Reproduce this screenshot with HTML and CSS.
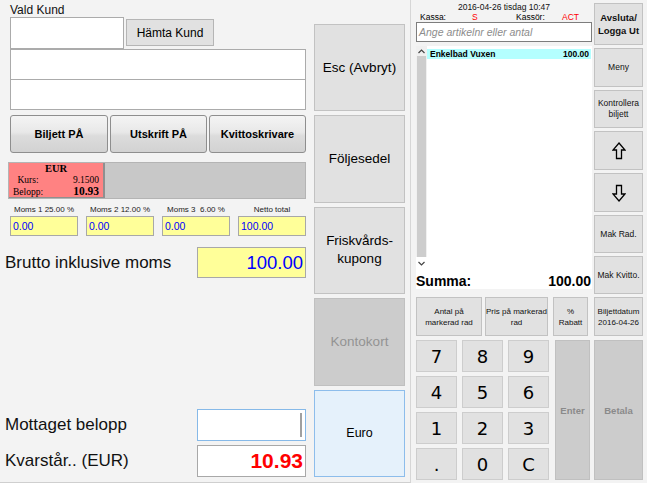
FILE: index.html
```html
<!DOCTYPE html>
<html lang="sv">

<head>
    <meta charset="UTF-8">
    <title>Kassa</title>
    <link rel="stylesheet" href="styles.css">
</head>

<body>
    <div class="screen">
        <!-- vänster del: kund, moms och betalning -->
        <div class="sale">
            <div class="customer">
                <div class="caption">Vald Kund</div>
                <div class="cust-row">
                    <div class="field cust-id"></div>
                    <button class="btn fetch">Hämta Kund</button>
                </div>
                <div class="field cust-line"></div>
                <div class="field cust-line second"></div>

                <div class="toggles">
                    <button class="toggle">Biljett PÅ</button>
                    <button class="toggle">Utskrift PÅ</button>
                    <button class="toggle">Kvittoskrivare</button>
                </div>

                <div class="currency">
                    <div class="cur-box">
                        <div class="cur-name">EUR</div>
                        <div class="cur-line"><span class="cur-label">Kurs:</span><span>9.1500</span></div>
                        <div class="cur-line last"><span class="cur-label">Belopp:</span><b class="cur-sum">10.93</b></div>
                    </div>
                </div>

                <div class="vat">
                    <div class="vat-cell">
                        <div class="vat-label">Moms 1 25.00 %</div>
                        <div class="vat-value">0.00</div>
                    </div>
                    <div class="vat-cell">
                        <div class="vat-label">Moms 2 12.00 %</div>
                        <div class="vat-value">0.00</div>
                    </div>
                    <div class="vat-cell">
                        <div class="vat-label">Moms 3  6.00 %</div>
                        <div class="vat-value">0.00</div>
                    </div>
                    <div class="vat-cell">
                        <div class="vat-label">Netto total</div>
                        <div class="vat-value">100.00</div>
                    </div>
                </div>

                <div class="total-row brutto">
                    <span class="total-label">Brutto inklusive moms</span>
                    <div class="amount gross">100.00</div>
                </div>

                <div class="spacer"></div>

                <div class="total-row">
                    <span class="total-label">Mottaget belopp</span>
                    <div class="amount received"><i class="caret"></i></div>
                </div>
                <div class="total-row due-row">
                    <span class="total-label">Kvarstår.. (EUR)</span>
                    <div class="amount due">10.93</div>
                </div>
            </div>

            <div class="payments">
                <button class="btn pay">Esc (Avbryt)</button>
                <button class="btn pay">Följesedel</button>
                <button class="btn pay">Friskvårds-<br>kupong</button>
                <button class="btn pay off">Kontokort</button>
                <button class="btn pay euro">Euro</button>
            </div>
        </div>

        <!-- höger del: kassarader och knappsats -->
        <div class="register">
            <div class="register-main">
                <div class="head">
                    <div class="date">2016-04-26 tisdag 10:47</div>
                    <div class="till">
                        <span class="till-key">Kassa:</span>
                        <span class="till-val">S</span>
                        <span class="till-key">Kassör:</span>
                        <span class="till-val">ACT</span>
                    </div>
                </div>
                <div class="article">Ange artikelnr eller antal</div>

                <div class="list">
                    <div class="list-body">
                        <div class="scroll">
                            <div class="scroll-arrow">
                                <svg width="7" height="5" viewBox="0 0 7 5"><path d="M0.5 4 L3.5 1 L6.5 4" fill="none" stroke="#444" stroke-width="1.2"/></svg>
                            </div>
                            <div class="scroll-thumb"></div>
                            <div class="scroll-arrow down">
                                <svg width="7" height="5" viewBox="0 0 7 5"><path d="M0.5 1 L3.5 4 L6.5 1" fill="none" stroke="#444" stroke-width="1.2"/></svg>
                            </div>
                        </div>
                        <div class="rows">
                            <div class="row sel"><span>Enkelbad Vuxen</span><span>100.00</span></div>
                        </div>
                    </div>
                    <div class="sum"><span>Summa:</span><span>100.00</span></div>
                </div>

                <div class="row-tools">
                    <button class="btn small tool qty">Antal på<br>markerad rad</button>
                    <button class="btn small tool price">Pris på markerad<br>rad</button>
                    <button class="btn small tool rebate">%<br>Rabatt</button>
                </div>

                <div class="keypad">
                    <div class="keys">
                        <button class="btn key">7</button>
                        <button class="btn key">8</button>
                        <button class="btn key">9</button>
                        <button class="btn key">4</button>
                        <button class="btn key">5</button>
                        <button class="btn key">6</button>
                        <button class="btn key">1</button>
                        <button class="btn key">2</button>
                        <button class="btn key">3</button>
                        <button class="btn key">.</button>
                        <button class="btn key">0</button>
                        <button class="btn key">C</button>
                    </div>
                    <button class="btn off enter">Enter</button>
                </div>
            </div>

            <div class="register-side">
                <div class="side-menu">
                    <button class="btn small strong">Avsluta/<br>Logga Ut</button>
                    <button class="btn small">Meny</button>
                    <button class="btn small">Kontrollera<br>biljett</button>
                    <button class="btn small">
                        <svg width="14" height="18" viewBox="0 0 14 18"><path d="M7 1 L13 8 L9.5 8 L9.5 16.5 L4.5 16.5 L4.5 8 L1 8 Z" fill="none" stroke="#000" stroke-width="1.3" stroke-linejoin="miter"/></svg>
                    </button>
                    <button class="btn small">
                        <svg width="14" height="18" viewBox="0 0 14 18"><path d="M7 17 L13 10 L9.5 10 L9.5 1.5 L4.5 1.5 L4.5 10 L1 10 Z" fill="none" stroke="#000" stroke-width="1.3" stroke-linejoin="miter"/></svg>
                    </button>
                    <button class="btn small">Mak Rad.</button>
                    <button class="btn small">Mak Kvitto.</button>
                    <button class="btn small tool">Biljettdatum<br>2016-04-26</button>
                </div>
                <button class="btn off enter pay-now">Betala</button>
            </div>
        </div>
    </div>
</body>

</html>
```

FILE: styles.css
```css
body {
    margin: 0;
    background-color: #f3f3f3;
    font-family: "Liberation Sans", Arial, sans-serif;
    color: #000;
}

.screen {
    display: flex;
    width: 647px;
    height: 483px;
    overflow: hidden;
}

button {
    font-family: "Liberation Sans", Arial, sans-serif;
    color: #000;
    padding: 0;
    margin: 0;
    box-sizing: border-box;
}

.btn {
    background-color: #e1e1e1;
    border: 1px solid #c2c2c2;
}

.btn.off {
    background-color: #cccccc;
    border-color: #c0c0c0;
    color: #8a8a8a;
}

/* vänster del */
.sale {
    display: flex;
    width: 411px;
    height: 483px;
    box-sizing: border-box;
    padding: 0 5px 0 10px;
    border-right: 1px solid #d6d6d6;
    border-bottom: 1px solid #cfcfcf;
}

.customer {
    display: flex;
    flex-direction: column;
    width: 296px;
    padding-bottom: 5px;
}

.caption {
    padding-top: 3px;
    height: 14px;
    line-height: 14px;
    font-size: 12px;
    color: #111;
}

.field {
    background-color: #fff;
    border: 1px solid #ababab;
    box-sizing: border-box;
}

.cust-row {
    display: flex;
    height: 32px;
}

.cust-id {
    width: 114px;
    height: 32px;
}

.fetch {
    width: 88px;
    height: 27px;
    margin: 2px 0 0 2px;
    font-size: 12px;
    border-color: #b5b5b5;
}

.cust-line {
    height: 31px;
}

.cust-line.second {
    margin-top: -1px;
}

.toggles {
    display: grid;
    grid-template-columns: 98px 97px 97px;
    gap: 2px;
    height: 38px;
    margin-top: 5px;
}

.toggle {
    background: linear-gradient(#f4f4f4, #e8e8e8 45%, #dcdcdc 55%, #d2d2d2);
    border: 1px solid #8e8e8e;
    border-radius: 3px;
    font-size: 11px;
    font-weight: bold;
}

.currency {
    display: flex;
    height: 37px;
    margin: 9px 0 0 -2px;
    width: 298px;
    background-color: #c8c8c8;
    border: 1px solid #b4b4b4;
    box-sizing: border-box;
}

.cur-box {
    width: 96px;
    background-color: #ff8282;
    border-right: 2px solid #8f8f8f;
    border-bottom: 1px solid #8f8f8f;
    box-sizing: border-box;
    font-family: "Liberation Serif", "Times New Roman", serif;
    font-size: 9.5px;
    padding: 0 4px;
}

.cur-name {
    height: 11.6px;
    line-height: 11.6px;
    text-align: center;
    font-weight: bold;
    font-size: 10.5px;
}

.cur-line {
    display: flex;
    justify-content: space-between;
    align-items: baseline;
    height: 10.6px;
    line-height: 10.6px;
}

.cur-line.last {
    height: 12.8px;
    line-height: 12.8px;
}

.cur-label {
    width: 30px;
    text-align: center;
}

.cur-sum {
    font-size: 11.5px;
}

.vat {
    display: grid;
    grid-template-columns: repeat(4, 68px);
    column-gap: 8px;
    margin-top: 6px;
}

.vat-label {
    height: 11px;
    line-height: 10px;
    font-size: 8px;
    text-align: center;
    white-space: pre;
    color: #222;
}

.vat-value {
    height: 20px;
    line-height: 18px;
    box-sizing: border-box;
    background-color: #ffff99;
    border: 1px solid #a8a8a8;
    padding-left: 2px;
    font-size: 10.5px;
    color: #0000ff;
}

.total-row {
    display: flex;
    justify-content: space-between;
    align-items: center;
    height: 32px;
}

.total-label {
    margin-left: -5px;
    font-size: 17px;
    color: #111;
}

.brutto {
    height: 31px;
    margin-top: 11px;
}

.spacer {
    flex: 1;
}

.due-row {
    margin-top: 4px;
}

.amount {
    width: 109px;
    height: 100%;
    box-sizing: border-box;
    border: 1px solid #a8a8a8;
    background-color: #fff;
    text-align: right;
    padding-right: 2px;
}

.gross {
    background-color: #ffff99;
    color: #0000ff;
    font-size: 18.5px;
    line-height: 29px;
}

.received {
    display: flex;
    justify-content: flex-end;
    align-items: center;
    border-color: #86b9e8;
    padding-right: 3px;
}

.caret {
    width: 2px;
    height: 24px;
    background-color: #a0a0a0;
}

.due {
    color: #ff0000;
    font-weight: bold;
    font-size: 21px;
    line-height: 30px;
}

.payments {
    display: grid;
    grid-template-rows: repeat(5, 1fr);
    gap: 4px;
    width: 91px;
    margin-left: 8px;
    padding: 24px 0 5px 0;
    box-sizing: border-box;
}

.pay {
    font-size: 13.5px;
    line-height: 18px;
}

.pay.off {
    color: #939393;
}

.pay.euro {
    background-color: #e5f1fb;
    border-color: #8dbdeb;
    font-size: 12.5px;
}

/* höger del */
.register {
    display: flex;
    padding-left: 5px;
}

.register-main {
    display: flex;
    flex-direction: column;
    width: 176px;
}

.head {
    height: 22px;
    font-size: 8.5px;
}

.date {
    text-align: center;
    padding-top: 2px;
    line-height: 10px;
    color: #111;
}

.till {
    display: grid;
    grid-template-columns: 52px 44px 46px auto;
    padding-left: 4px;
    line-height: 10px;
}

.till-val {
    color: #ff0000;
}

.article {
    height: 20px;
    box-sizing: border-box;
    background-color: #fff;
    border: 1px solid #7d7d7d;
    font-size: 10.5px;
    font-style: italic;
    color: #8d8d8d;
    line-height: 18px;
    padding-left: 2px;
}

.list {
    display: flex;
    flex-direction: column;
    height: 243px;
    margin-top: 4px;
    background-color: #fff;
}

.list-body {
    display: flex;
    height: 224px;
}

.scroll {
    display: flex;
    flex-direction: column;
    width: 11px;
    background-color: #f0f0f0;
}

.scroll-arrow {
    display: flex;
    justify-content: center;
    align-items: center;
    height: 10px;
}

.scroll-arrow.down {
    height: 13px;
    background-color: #fff;
}

.scroll-thumb {
    flex: 1;
    background-color: #cdcdcd;
    margin: 0 1px;
}

.rows {
    flex: 1;
    padding: 3px 1px 0 0;
}

.row {
    display: flex;
    justify-content: space-between;
    height: 10px;
    line-height: 10px;
    font-size: 8.5px;
    font-weight: bold;
    padding: 0 2px 0 3px;
}

.row.sel {
    background-color: #b4ffff;
}

.sum {
    display: flex;
    justify-content: space-between;
    align-items: flex-end;
    height: 19px;
    font-size: 14px;
    font-weight: bold;
    line-height: 16px;
    padding-right: 1px;
}

.small {
    font-size: 8.5px;
    line-height: 11px;
    color: #111;
}

.tool {
    font-size: 8px;
    white-space: nowrap;
}

.strong {
    font-weight: bold;
    font-size: 9.5px;
    line-height: 13px;
}

.row-tools {
    display: flex;
    height: 39px;
    margin-top: 8px;
}

.qty {
    width: 66px;
}

.price {
    width: 63px;
    margin-left: 3px;
}

.rebate {
    width: 35px;
    margin-left: 5px;
}

.keypad {
    display: flex;
    height: 140px;
    margin-top: 4px;
}

.keys {
    display: grid;
    grid-template-columns: repeat(3, 41px);
    grid-template-rows: repeat(4, 32px);
    gap: 4px 5px;
}

.key {
    font-family: "DejaVu Sans", Verdana, sans-serif;
    font-size: 18px;
    border-color: #cdcdcd;
}

.enter {
    width: 35px;
    margin-left: 6px;
    font-size: 9.5px;
    font-weight: bold;
}

.register-side {
    display: flex;
    flex-direction: column;
    width: 49px;
    margin-left: 2px;
    padding-top: 3px;
}

.side-menu {
    display: grid;
    grid-template-rows: 42px 39px 38px 39px 39px 38px 38px 39px;
    gap: 3px;
}

.side-menu svg {
    display: block;
    margin: 0 auto;
}

.pay-now {
    width: 49px;
    height: 140px;
    margin: 4px 0 0 0;
}
```
